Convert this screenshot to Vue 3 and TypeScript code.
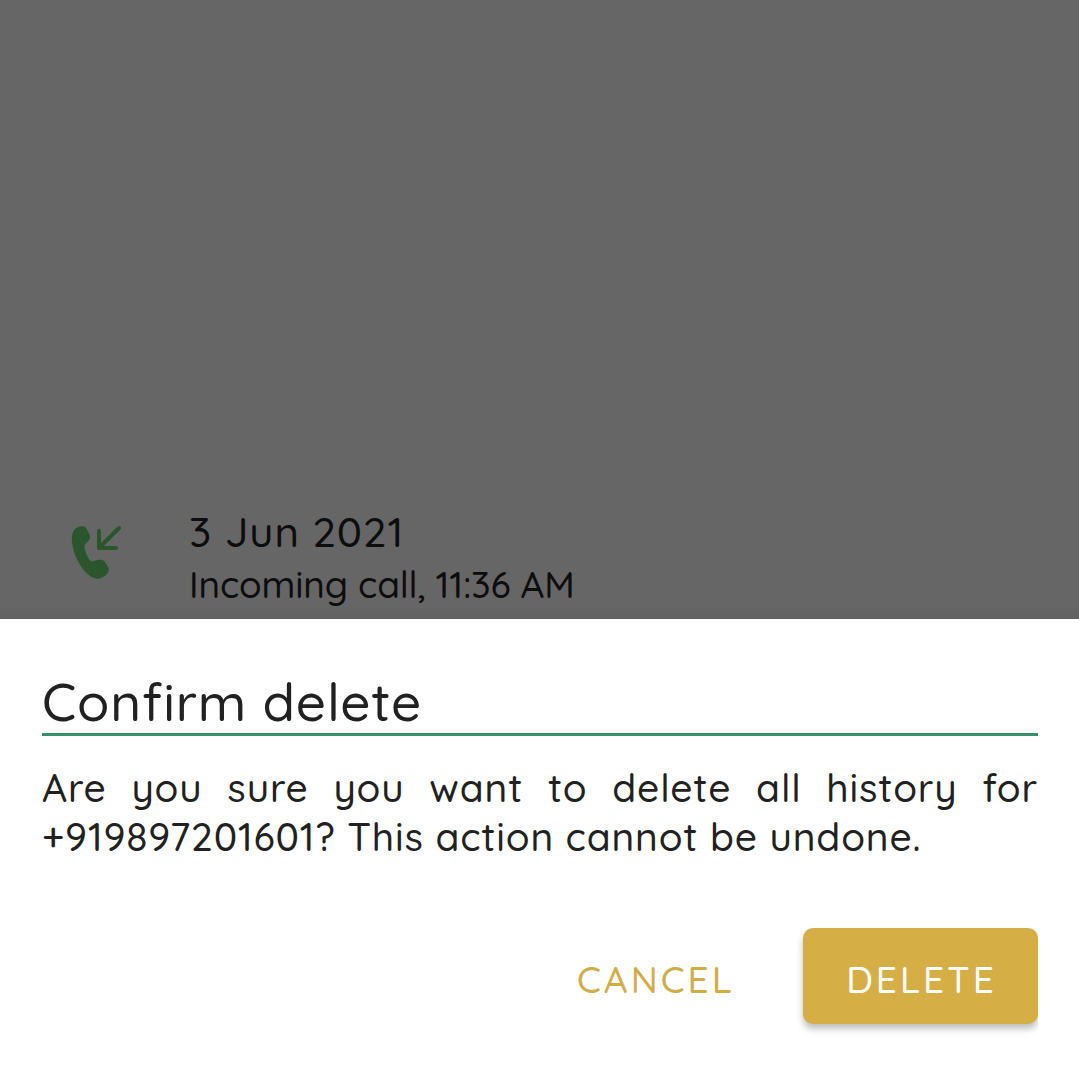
<script setup lang="ts">
interface CallEntry {
  date: string
  detail: string
}

const call: CallEntry = { date: '3 Jun 2021', detail: 'Incoming call, 11:36 AM' }
const phoneNumber = '+919897201601'
</script>

<template>
  <main class="screen">
    <section class="history">
      <svg class="call-icon" width="56" height="60" viewBox="68 522 56 60" aria-hidden="true">
        <path
          class="handset"
          d="M76 528.3 C79.5 525.8 84.5 525.3 86.4 528.4 L89.5 534.2 C91.4 538 88.5 541.5 84.6 544.7 C83.3 547 87.5 559.2 91.7 561.4 C96.5 560.2 101.5 558.2 104.5 561.3 L108 566.8 C110.5 571 106.5 575.5 102.5 577.5 C97.5 580.2 91.5 577.8 87 573.5 C79.5 566.5 73.5 554 72.2 543 C71.4 536 72.3 531 76 528.3 Z"
        />
        <path class="arrow" d="M119 528 L99 548 M99 530.8 V548 H116" />
      </svg>
      <div class="call-text">
        <div class="date">{{ call.date }}</div>
        <div class="detail">{{ call.detail }}</div>
      </div>
    </section>
    <section class="sheet" role="dialog" aria-labelledby="sheet-title">
      <h1 id="sheet-title" class="title">Confirm delete</h1>
      <p class="message">
        Are you sure you want to delete all history for
        <span class="second-line">{{ phoneNumber }}? This action cannot be undone.</span>
      </p>
      <div class="actions">
        <button class="cancel" type="button"><span>CANCEL</span></button>
        <button class="delete" type="button"><span>DELETE</span></button>
      </div>
    </section>
  </main>
</template>

<style>
body {
  margin: 0;
}
</style>

<style scoped>
.screen {
  width: 1079px;
  height: 1080px;
  display: flex;
  flex-direction: column;
  overflow: hidden;
  background: #fff;
  font-family: Quicksand, Lato, sans-serif;
  font-weight: 500;
  color: #212121;
}
.history {
  box-sizing: border-box;
  height: 619px;
  display: flex;
  align-items: flex-start;
  padding: 507px 0 0 68px;
  background: linear-gradient(#666 0, #666 604px, #616161 619px);
  color: #0d0d0d;
}
.call-icon {
  margin-top: 15px;
  flex: none;
}
.handset {
  fill: #2b552c;
}
.arrow {
  fill: none;
  stroke: #2b552c;
  stroke-width: 4;
  stroke-linecap: round;
  stroke-linejoin: round;
}
.call-text {
  margin-left: 65px;
  white-space: nowrap;
}
.date {
  font-size: 42px;
  line-height: 50px;
  letter-spacing: 0.95px;
}
.detail {
  margin-top: 5px;
  font-size: 37px;
  line-height: 44px;
  letter-spacing: -0.12px;
}
.sheet {
  height: 461px;
  box-sizing: border-box;
  padding: 51px 41px 0 42px;
}
.title {
  margin: 0;
  height: 63px;
  border-bottom: 3px solid #359169;
  font-size: 53px;
  font-weight: 500;
  line-height: 62px;
  letter-spacing: 0.8px;
  white-space: nowrap;
}
.message {
  margin: 27px 0 0;
  font-size: 39px;
  line-height: 49px;
  letter-spacing: 0.84px;
  text-align: justify;
  text-align-last: justify;
}
.second-line {
  display: block;
  text-align-last: left;
  white-space: nowrap;
}
.actions {
  display: flex;
  justify-content: flex-end;
  margin-top: 67px;
  height: 110px;
  overflow: hidden;
}
button {
  box-sizing: border-box;
  height: 96px;
  border: 0;
  padding: 6px 0 0;
  font: 500 37px/44px Quicksand, Lato, sans-serif;
  letter-spacing: 3px;
  white-space: nowrap;
}
.cancel {
  width: 156px;
  margin-right: 70px;
  background: transparent;
  color: #d0ad49;
}
.delete {
  width: 235px;
  padding-left: 2px;
  border-radius: 10px;
  background: #d6ae46;
  color: #fff;
  box-shadow: 0 5px 7px rgba(0, 0, 0, 0.25);
}
</style>
